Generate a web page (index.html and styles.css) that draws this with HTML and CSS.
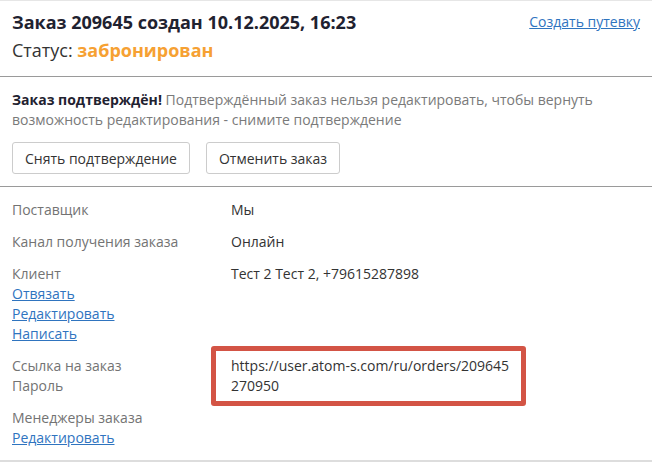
FILE: index.html
```html
<!DOCTYPE html>
<html lang="ru">
<head>
  <meta charset="UTF-8" />
  <meta name="viewport" content="width=device-width, initial-scale=1.0"/>
  <title>Заказ 209645</title>
  <link rel="stylesheet" href="styles.css">
</head>
<body>
  <div class="order">
    <header class="order-header">
      <div>
        <h1 class="order-title">Заказ 209645 создан 10.12.2025, 16:23</h1>
        <div class="order-status">Статус: <strong>забронирован</strong></div>
      </div>
      <a href="#" class="link header-link">Создать путевку</a>
    </header>

    <section class="confirm">
      <p class="confirm-text"><strong>Заказ подтверждён!</strong> Подтверждённый заказ нельзя редактировать, чтобы вернуть возможность редактирования - снимите подтверждение</p>
      <div class="actions">
        <button class="btn">Снять подтверждение</button>
        <button class="btn">Отменить заказ</button>
      </div>
    </section>

    <section class="details">
      <div class="label">Поставщик</div>
      <div class="value">Мы</div>

      <div class="label">Канал получения заказа</div>
      <div class="value">Онлайн</div>

      <div class="label">
        Клиент<br>
        <a href="#" class="link">Отвязать</a><br>
        <a href="#" class="link">Редактировать</a><br>
        <a href="#" class="link">Написать</a>
      </div>
      <div class="value">Тест 2 Тест 2, +79615287898</div>

      <div class="label">Ссылка на заказ<br>Пароль</div>
      <div class="value"><span class="highlight">https://user.atom-s.com/ru/orders/209645<br>270950</span></div>

      <div class="label">
        Менеджеры заказа<br>
        <a href="#" class="link">Редактировать</a>
      </div>
      <div class="value"></div>
    </section>
  </div>
</body>
</html>
```

FILE: styles.css
```css
body {
  font-family: 'Open Sans', 'Liberation Sans', sans-serif;
  font-size: 14px;
  line-height: 20px;
  color: #333333;
  background-color: #ffffff;
  margin: 0;
  padding: 0;
}

.order {
  border-top: 1px solid #e6e6e6;
  border-bottom: 3px solid #dddddd;
}

.order-header {
  display: flex;
  justify-content: space-between;
  align-items: flex-start;
  padding: 9px 12px 14px;
  border-bottom: 1px solid #9a9a9a;
}

.order-title {
  margin: 0;
  font-size: 18px;
  line-height: 24px;
  font-weight: 700;
  color: #1f2230;
}

.order-status {
  margin-top: 4px;
  font-size: 18px;
  line-height: 24px;
  color: #333333;
}

.order-status strong {
  color: #f6a133;
}

.link {
  color: #2f74bf;
  text-decoration: underline;
}

.header-link {
  margin-top: 2px;
}

.confirm {
  padding: 13px 12px 12px;
  border-bottom: 1px solid #9a9a9a;
}

.confirm-text {
  margin: 0;
  color: #7a7a7a;
}

.confirm-text strong {
  color: #1f2230;
}

.actions {
  display: flex;
  gap: 16px;
  margin-top: 12px;
}

.btn {
  height: 32px;
  padding: 0 12px;
  font-family: inherit;
  font-size: 14px;
  color: #333333;
  background-color: #ffffff;
  border: 1px solid #cccccc;
  border-radius: 3px;
}

.details {
  display: grid;
  grid-template-columns: 219px 1fr;
  row-gap: 12px;
  padding: 13px 12px 12px;
}

.label {
  color: #737373;
}

.highlight {
  position: relative;
  display: inline-block;
}

.highlight::after {
  content: "";
  position: absolute;
  top: -10px;
  bottom: -10px;
  left: -20px;
  right: -17px;
  border: 5px solid #d35445;
  border-radius: 3px;
}
```
